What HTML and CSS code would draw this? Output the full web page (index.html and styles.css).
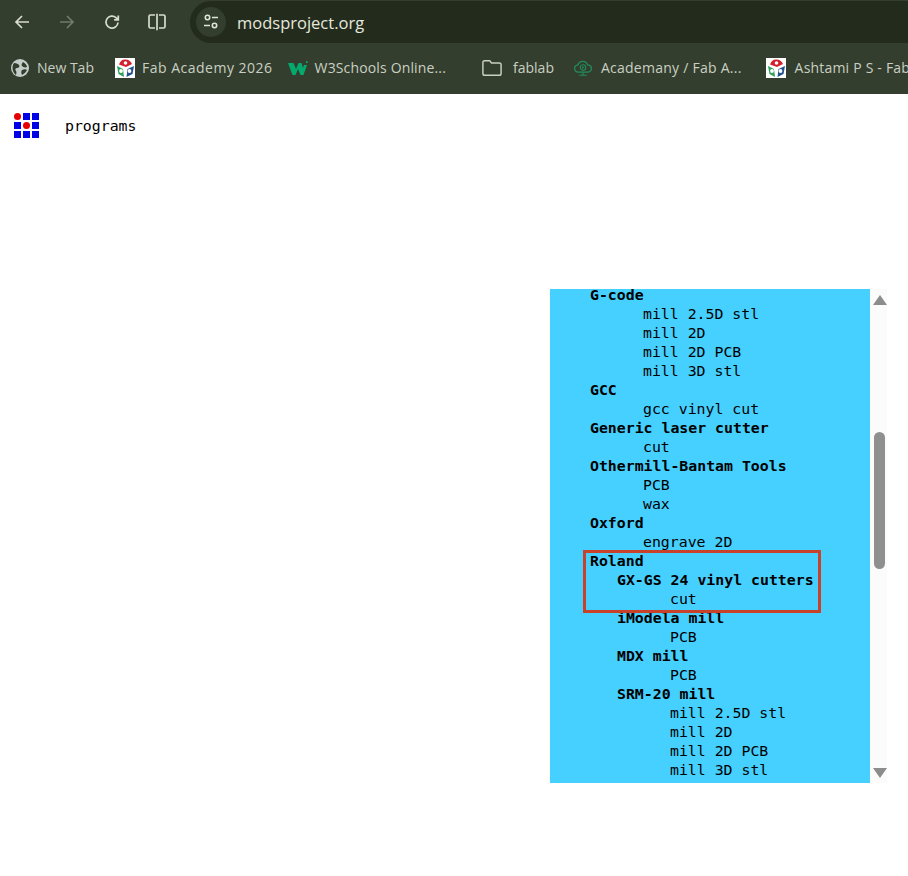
FILE: index.html
```html
<!doctype html>
<html lang="en">
  <head>
    <meta charset="UTF-8" />
    <meta name="viewport" content="width=device-width, initial-scale=1.0" />
    <title>mods</title>
    <link rel="stylesheet" href="styles.css">
  </head>
  <body>
    <!-- browser toolbar -->
    <div class="toolbar">
      <svg class="nav-icon back" viewBox="0 0 18 18"><path d="M16 9H3M9 3L3 9l6 6"/></svg>
      <svg class="nav-icon forward" viewBox="0 0 18 18"><path d="M2 9h13M9 3l6 6-6 6"/></svg>
      <svg class="nav-icon reload" viewBox="0 0 18 18"><path d="M15 9.5A6 6 0 1 1 13 4.6L15 6.6M15.3 2.6v4.2h-4.2"/></svg>
      <svg class="nav-icon split" viewBox="0 0 20 18"><path d="M8 2H3.500A1.500 1.500 0 0 0 2 3.500v10A1.500 1.500 0 0 0 3.500 15H8M10 .8v16.400M12 2h4.500A1.500 1.500 0 0 1 18 3.500v10a1.500 1.500 0 0 1-1.500 1.500H12"/></svg>
      <div class="omnibox">
        <div class="site-chip">
          <svg viewBox="0 0 18 18"><circle cx="5.500" cy="4.500" r="2.200"/><path d="M10 4.500h6M2 12.500h6"/><circle cx="12.500" cy="12.500" r="2.200"/></svg>
        </div>
        <span class="url">modsproject.org</span>
      </div>
    </div>

    <!-- bookmarks -->
    <div class="bookmarks">
      <div class="bookmark new-tab">
        <svg class="fav" viewBox="0 0 18 18"><circle cx="9" cy="9" r="9" fill="#c6cdc9"/><path d="M3 4c3 0 4 1 5 2s0 3-2 3-2 2-1 3 0 4 0 4C2 14 0 8 3 4zM12 3c2 1 4 3 4 5-2 1-4 0-5-1s0-3 1-4zM11 11c2-1 4-1 5 0-1 2-3 4-5 5-1-2-1-4 0-5z" fill="#343e2e"/></svg>
        <span>New Tab</span>
      </div>
      <div class="bookmark fab">
        <svg class="fav" viewBox="0 0 20 20"><rect width="20" height="20" fill="#fff"/><path d="M4 6.500C5 3 8 1 10.500 1.500 13.500 1.500 16 3.500 17 6l-6 3z" fill="#d3202c"/><circle cx="10.500" cy="5" r="1.800" fill="#fff"/><path d="M2 8l6 3 1 8-5.500-3z" fill="#2f9e5b"/><path d="M19 8l-6.500 3-1 8 6-3z" fill="#23508f"/><circle cx="6" cy="13" r="1.900" fill="#fff"/><circle cx="14.500" cy="13" r="1.900" fill="#fff"/></svg>
        <span>Fab Academy 2026</span>
      </div>
      <div class="bookmark w3">
        <svg class="fav" viewBox="0 0 20 18"><path d="M0 4h5.500l2.500 6 2.500-6h3l1.500 5 1-3h3l-3.500 10h-3L10 10l-2.500 6h-3z" fill="#04aa6d"/><path d="M18 2h1.500v2H18z" fill="#04aa6d"/></svg>
        <span>W3Schools Online...</span>
      </div>
      <div class="bookmark folder">
        <svg class="fav" viewBox="0 0 22 18"><path d="M1 3a2 2 0 0 1 2-2h5.500l2 2.500H19a2 2 0 0 1 2 2V15a2 2 0 0 1-2 2H3a2 2 0 0 1-2-2z" fill="none" stroke="#c9d0c3" stroke-width="1.600"/></svg>
        <span>fablab</span>
      </div>
      <div class="bookmark academany">
        <svg class="fav" viewBox="0 0 22 20"><path d="M6 14.500a4 4 0 0 1-.5-8A5.500 5.500 0 0 1 16 6.500a4 4 0 0 1 .5 8z" fill="none" stroke="#1f8f5f" stroke-width="1.400"/><circle cx="11" cy="9.500" r="3" fill="none" stroke="#1f8f5f" stroke-width="1.200"/><path d="M10 8l2.500 1.500L10 11z" fill="#1f8f5f"/><path d="M11 15v3M7 18h8" stroke="#1f8f5f" stroke-width="1.200"/></svg>
        <span>Academany / Fab A...</span>
      </div>
      <div class="bookmark ashtami">
        <svg class="fav" viewBox="0 0 20 20"><rect width="20" height="20" fill="#fff"/><path d="M4 6.500C5 3 8 1 10.500 1.500 13.500 1.500 16 3.500 17 6l-6 3z" fill="#d3202c"/><circle cx="10.500" cy="5" r="1.800" fill="#fff"/><path d="M2 8l6 3 1 8-5.500-3z" fill="#2f9e5b"/><path d="M19 8l-6.500 3-1 8 6-3z" fill="#23508f"/><circle cx="6" cy="13" r="1.900" fill="#fff"/><circle cx="14.500" cy="13" r="1.900" fill="#fff"/></svg>
        <span>Ashtami P S - Fab</span>
      </div>
    </div>

    <!-- page -->
    <div class="page">
      <div class="top-row">
        <div class="mods-logo">
          <span class="dot"></span><span class="square"></span><span class="square"></span>
          <span class="square"></span><span class="dot"></span><span class="square"></span>
          <span class="square"></span><span class="square"></span><span class="square"></span>
        </div>
        <span class="menu-label">programs</span>
      </div>

      <div class="panel-wrap">
        <div class="panel">
          <div class="list">
            <div class="machine">G-code</div>
            <div class="program">mill 2.5D stl</div>
            <div class="program">mill 2D</div>
            <div class="program">mill 2D PCB</div>
            <div class="program">mill 3D stl</div>
            <div class="machine">GCC</div>
            <div class="program">gcc vinyl cut</div>
            <div class="machine">Generic laser cutter</div>
            <div class="program">cut</div>
            <div class="machine">Othermill-Bantam Tools</div>
            <div class="program">PCB</div>
            <div class="program">wax</div>
            <div class="machine">Oxford</div>
            <div class="program">engrave 2D</div>
            <div class="machine">Roland</div>
            <div class="machine sub">GX-GS 24 vinyl cutters</div>
            <div class="program sub">cut</div>
            <div class="machine sub">iModela mill</div>
            <div class="program sub">PCB</div>
            <div class="machine sub">MDX mill</div>
            <div class="program sub">PCB</div>
            <div class="machine sub">SRM-20 mill</div>
            <div class="program sub">mill 2.5D stl</div>
            <div class="program sub">mill 2D</div>
            <div class="program sub">mill 2D PCB</div>
            <div class="program sub">mill 3D stl</div>
          </div>
          <div class="highlight"></div>
          <div class="scrollbar">
            <div class="arrow-up"></div>
            <div class="track"><div class="thumb"></div></div>
            <div class="arrow-down"></div>
          </div>
        </div>
      </div>
    </div>
  </body>
</html>
```

FILE: styles.css
```css
* {
  margin: 0;
  padding: 0;
  box-sizing: border-box;
}

html,
body {
  height: 100%;
  overflow: hidden;
  background: white;
}

body {
  font-family: 'Open Sans', 'Noto Sans', sans-serif;
}

.toolbar {
  height: 43px;
  background: #343e2e;
  display: flex;
  align-items: center;
  padding-left: 13px;
}

.nav-icon {
  width: 18px;
  height: 18px;
  fill: none;
  stroke: #d6dcd0;
  stroke-width: 1.7;
  flex: none;
}

.nav-icon.forward {
  margin-left: 27px;
  stroke: #727a6c;
}

.nav-icon.reload {
  margin-left: 27px;
}

.nav-icon.split {
  width: 20px;
  margin-left: 26px;
}

.omnibox {
  margin-left: 23px;
  margin-top: 1px;
  flex: 1;
  height: 42px;
  background: #232b1c;
  border-radius: 21px 0 0 21px;
  display: flex;
  align-items: center;
  padding-left: 6px;
}

.site-chip {
  width: 30px;
  height: 30px;
  border-radius: 50%;
  background: #343e2e;
  display: flex;
  align-items: center;
  justify-content: center;
}

.site-chip svg {
  width: 18px;
  height: 18px;
  fill: none;
  stroke: #dfe4da;
  stroke-width: 1.6;
}

.url {
  margin-left: 11px;
  color: #e4e8df;
  font-size: 16.5px;
}

.bookmarks {
  height: 51px;
  background: #343e2e;
  display: flex;
  align-items: center;
  padding: 0 0 2px 11px;
  overflow: hidden;
  white-space: nowrap;
}

.bookmark {
  display: flex;
  align-items: center;
  flex: none;
  color: #c9d0c3;
  font-size: 14px;
}

.fav {
  width: 20px;
  height: 20px;
  flex: none;
}

.bookmark span {
  margin-left: 7px;
}

.new-tab .fav {
  width: 18px;
  height: 18px;
}

.new-tab span { margin-left: 8px; }
.fab { margin-left: 21px; }
.fab span { letter-spacing: 0.5px; }
.w3 { margin-left: 15px; }
.w3 span { margin-left: 7px; letter-spacing: 0.15px; }
.folder { margin-left: 36px; }
.folder span { margin-left: 11px; }
.academany { margin-left: 19px; }
.academany span { margin-left: 8px; letter-spacing: 0.25px; }
.ashtami { margin-left: 24px; }
.ashtami span { margin-left: 9px; letter-spacing: 0.2px; }

.page {
  padding: 19px 0 0 14px;
}

.top-row {
  display: flex;
  align-items: center;
}

.mods-logo {
  display: grid;
  grid-template-columns: repeat(3, 7px);
  grid-auto-rows: 7px;
  gap: 2px;
  flex: none;
}

.square {
  background: #0000e6;
}

.dot {
  background: #e60000;
  border-radius: 50%;
}

.menu-label,
.list {
  font-family: 'DejaVu Sans Mono', 'Liberation Mono', monospace;
  font-size: 14.85px;
  color: #000;
}

.menu-label {
  margin-left: 26px;
}

.panel-wrap {
  margin: 151px 0 0 536px;
}

.panel {
  position: relative;
  display: flex;
  width: 337px;
  height: 494px;
}

.list {
  width: 320px;
  height: 494px;
  overflow: hidden;
  background: #45d0ff;
  padding-left: 40px;
  line-height: 19px;
  white-space: nowrap;
}

/* list is scrolled, first row sits slightly under the top edge */
.machine,
.program {
  position: relative;
  top: -3px;
}

.machine {
  font-weight: bold;
}

.machine.sub {
  padding-left: 27px;
}

.program {
  padding-left: 53px;
}

.program.sub {
  padding-left: 80px;
}

.highlight {
  position: absolute;
  left: 33px;
  top: 261px;
  width: 238px;
  height: 63px;
  border: 3px solid #c8412b;
}

.scrollbar {
  width: 17px;
  padding-left: 2px;
  background: #fbfbfb;
  display: flex;
  flex-direction: column;
  align-items: center;
}

.arrow-up,
.arrow-down {
  width: 0;
  height: 0;
  border-left: 7px solid transparent;
  border-right: 7px solid transparent;
  flex: none;
}

.arrow-up {
  margin-top: 6px;
  border-bottom: 10px solid #8c8c8c;
}

.arrow-down {
  margin-bottom: 5px;
  border-top: 10px solid #8c8c8c;
}

.track {
  flex: 1;
  width: 11px;
}

.thumb {
  margin-top: 127px;
  height: 137px;
  background: #8f8f8f;
  border-radius: 6px;
}
```
